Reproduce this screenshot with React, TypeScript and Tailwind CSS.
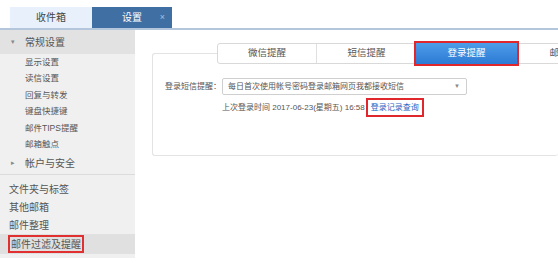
import React from "react";

const font = "font-['Liberation_Sans','Noto_Sans_CJK_SC',sans-serif]";

const subItems = ["显示设置", "读信设置", "回复与转发", "键盘快捷键", "邮件TIPS提醒", "邮箱触点"];
const segTabs = ["微信提醒", "短信提醒", "登录提醒", "邮件提醒"];

const App: React.FC = () => {
  return (
    <div className={`w-[558px] h-[263px] bg-white overflow-hidden ${font}`}>
      {/* top tabs */}
      <div className="h-[30px] flex items-end pl-[10px] border-b-2 border-[#b3c6dc]">
        <div className="w-[82px] h-[21px] bg-[#e8f1fb] flex items-center justify-center text-[10px] text-[#444]">
          收件箱
        </div>
        <div className="relative w-[80px] h-[21px] bg-[#3f6fa3] flex items-center justify-center text-[10px] text-white">
          设置
          <span className="absolute right-[7px] top-[4px] text-[9px] text-[#9fc1e6]">×</span>
        </div>
      </div>

      <div className="flex">
        {/* sidebar */}
        <div className="w-[135px] h-[228px] bg-[#f0f0f0] flex flex-col text-[#555] shrink-0">
          <div className="h-[24px] bg-[#e2e2e2] flex items-center text-[10px]">
            <span className="w-[25px] pl-[11px] text-[7px] text-[#888]">▾</span>
            常规设置
          </div>
          {subItems.map((s) => (
            <div key={s} className="h-[16.5px] flex items-center pl-[25px] text-[8.5px]">
              {s}
            </div>
          ))}
          <div className="h-[22px] flex items-center text-[10px] border-b border-[#dcdcdc]">
            <span className="w-[25px] pl-[11px] text-[7px] text-[#888]">▸</span>
            帐户与安全
          </div>
          <div className="pt-[5px] flex flex-col text-[10px]">
            <div className="h-[18px] flex items-center pl-[9px]">文件夹与标签</div>
            <div className="h-[18px] flex items-center pl-[9px]">其他邮箱</div>
            <div className="h-[18px] flex items-center pl-[9px]">邮件整理</div>
            <div className="h-[20px] bg-[#e0e0e0] flex items-center pl-[8px]">
              <span className="border-2 border-[#e0302f] px-[1px] h-[18px] flex items-center">邮件过滤及提醒</span>
            </div>
          </div>
        </div>

        {/* main */}
        <div className="flex-1 pl-[17px] pt-[23px]">
          <div className="relative h-[103px] border border-[#e3e3e3] rounded-[3px] border-r-0">
            <div className="absolute left-[64px] top-[-11px] flex h-[21px] bg-white border border-[#d9d9d9] rounded-[3px] text-[9.5px] text-[#555]">
              {segTabs.map((t, i) =>
                i === 2 ? (
                  <div key={t} className="w-[103px] h-[19px] relative">
                    <div className="absolute -left-[2px] -top-[3px] w-[105px] h-[25px] border-2 border-[#e0282c] bg-gradient-to-b from-[#4d9de9] to-[#2c7ad4] flex items-center justify-center text-white">
                      {t}
                    </div>
                  </div>
                ) : (
                  <div
                    key={t}
                    className={`w-[99px] h-[19px] flex items-center justify-center ${i === 0 ? "border-r border-[#e0e0e0]" : ""}`}
                  >
                    {t}
                  </div>
                )
              )}
            </div>

            <div className="pt-[24px] pl-[12px] text-[8px] text-[#555]">
              <div className="flex items-center">
                <span className="w-[57px]">登录短信提醒：</span>
                <div className="w-[245px] h-[17px] border border-[#cfcfcf] rounded-[2px] flex items-center justify-between pl-[5px] pr-[6px]">
                  <span>每日首次使用帐号密码登录邮箱网页我都接收短信</span>
                  <span className="text-[6px] text-[#888]">▼</span>
                </div>
              </div>
              <div className="flex items-center pl-[57px] mt-[3px]">
                <span>上次登录时间 2017-06-23(星期五) 16:58</span>
                <span className="ml-[1px] border-2 border-[#e0282c] px-[3px] h-[19px] flex items-center text-[#1f63c4]">
                  登录记录查询
                </span>
              </div>
            </div>
          </div>
        </div>
      </div>
    </div>
  );
};

export default App;
